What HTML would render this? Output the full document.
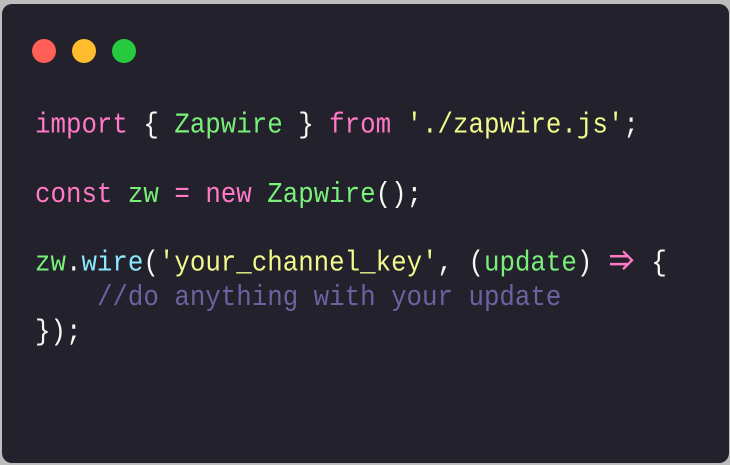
<!DOCTYPE html>
<html><head><meta charset="utf-8"><style>
html,body{margin:0;padding:0;width:730px;height:465px;background:#bdbdbd;overflow:hidden}
.card{position:absolute;left:2px;top:4px;width:727px;height:459px;background:#22212c;border-radius:10px}
.dot{position:absolute;top:35px;width:24px;height:24px;border-radius:50%}
pre{position:absolute;left:35px;top:109px;margin:0;font-family:"Liberation Mono",monospace;font-size:25.8px;line-height:30.8px;color:#f8f8f2;transform:scaleY(1.12);transform-origin:0 0}
.k{color:#ff79c6}.g{color:#7af07a}.y{color:#f1fa8c}.c{color:#8be9fd}.m{color:#6b63a0}
.a{display:inline-block;width:28px;height:20px;vertical-align:-1px}
</style></head><body>
<div class="card">
<div class="dot" style="left:30px;background:#ff5f56"></div>
<div class="dot" style="left:70px;background:#ffbd2e"></div>
<div class="dot" style="left:110px;background:#27c93f"></div>
</div>
<pre><span class="k">import</span> { <span class="g">Zapwire</span> } <span class="k">from</span> <span class="y">'./zapwire.js'</span>;

<span class="k">const</span> <span class="g">zw</span> <span class="k">=</span> <span class="k">new</span> <span class="g">Zapwire</span>();

<span class="g">zw</span>.<span class="c">wire</span>(<span class="y">'your_channel_key'</span>, (<span class="g">update</span>) <svg class="a" viewBox="0 0 28 20"><path d="M2 6.5H21M2 13.5H21M15 2L24 10L15 18" fill="none" stroke="#ff79c6" stroke-width="2.2"/></svg> {
    <span class="m">//do anything with your update</span>
});</pre>
</body></html>
